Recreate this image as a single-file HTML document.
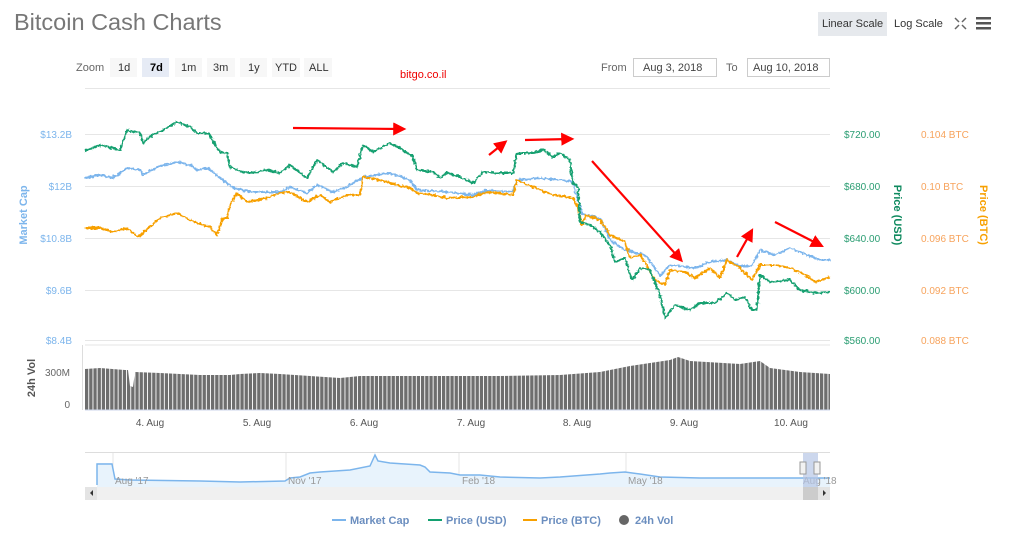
<!DOCTYPE html>
<html><head><meta charset="utf-8"><style>
html,body{margin:0;padding:0;background:#fff;width:1024px;height:533px;overflow:hidden;font-family:"Liberation Sans",sans-serif;}
</style></head><body>
<svg width="1024" height="533" xmlns="http://www.w3.org/2000/svg" font-family="Liberation Sans, sans-serif">
<defs>
<pattern id="bars" x="85" y="0" width="4.2" height="10" patternUnits="userSpaceOnUse"><rect x="0" y="0" width="3.3" height="10" fill="#6e6e6e"/></pattern>
<marker id="ah" markerWidth="6" markerHeight="6" refX="4" refY="3" orient="auto"><path d="M0,0 L6,3 L0,6 z" fill="#f00"/></marker>
<filter id="jit" x="-2%" y="-10%" width="104%" height="120%"><feTurbulence type="fractalNoise" baseFrequency="0.35" numOctaves="2" seed="3"/><feDisplacementMap in="SourceGraphic" scale="4" xChannelSelector="R" yChannelSelector="G"/></filter>
</defs>
<text x="14" y="30" font-size="23.5" fill="#777">Bitcoin Cash Charts</text>
<rect x="818" y="12" width="69" height="24" fill="#e6e9ed"/>
<text x="822" y="27" font-size="11" fill="#333">Linear Scale</text>
<text x="894" y="27" font-size="11" fill="#333">Log Scale</text>
<g stroke="#666" stroke-width="1.5" fill="none"><path d="M955,18 l4,4 M966,18 l-4,4 M955,29 l4,-4 M966,29 l-4,-4"/></g>
<g fill="#555"><rect x="976" y="17" width="15" height="2.5"/><rect x="976" y="22" width="15" height="2.5"/><rect x="976" y="27" width="15" height="2.5"/></g>
<text x="76" y="71" font-size="11" fill="#666">Zoom</text>
<g font-size="11" fill="#333">
<rect x="110" y="58" width="27" height="19" fill="#f7f7f7"/><text x="118" y="71">1d</text>
<rect x="142" y="58" width="27" height="19" fill="#e6ebf5"/><text x="150" y="71" font-weight="bold" fill="#000">7d</text>
<rect x="175" y="58" width="27" height="19" fill="#f7f7f7"/><text x="181" y="71">1m</text>
<rect x="207" y="58" width="28" height="19" fill="#f7f7f7"/><text x="213" y="71">3m</text>
<rect x="240" y="58" width="27" height="19" fill="#f7f7f7"/><text x="248" y="71">1y</text>
<rect x="272" y="58" width="28" height="19" fill="#f7f7f7"/><text x="275" y="71">YTD</text>
<rect x="304" y="58" width="28" height="19" fill="#f7f7f7"/><text x="309" y="71">ALL</text>
</g>
<text x="400" y="78" font-size="11" fill="#e00">bitgo.co.il</text>
<text x="601" y="71" font-size="11" fill="#666">From</text>
<rect x="633.5" y="58.5" width="83" height="18" fill="#fff" stroke="#ccc"/>
<text x="643" y="71" font-size="11" fill="#444">Aug 3, 2018</text>
<text x="726" y="71" font-size="11" fill="#666">To</text>
<rect x="747.5" y="58.5" width="82" height="18" fill="#fff" stroke="#ccc"/>
<text x="753" y="71" font-size="11" fill="#444">Aug 10, 2018</text>
<g stroke="#e6e6e6" stroke-width="1"><path d="M85,88.5H830M85,134.5H830M85,186.5H830M85,238.5H830M85,290.5H830M85,340.5H830"/></g>
<g font-size="10" fill="#7cb5ec" text-anchor="end"><text x="72" y="138">$13.2B</text><text x="72" y="190">$12B</text><text x="72" y="242">$10.8B</text><text x="72" y="294">$9.6B</text><text x="72" y="344">$8.4B</text></g>
<text transform="translate(27,215) rotate(-90)" font-size="11" font-weight="bold" fill="#7cb5ec" text-anchor="middle">Market Cap</text>
<g font-size="10" fill="#2a9d72"><text x="844" y="138">$720.00</text><text x="844" y="190">$680.00</text><text x="844" y="242">$640.00</text><text x="844" y="294">$600.00</text><text x="844" y="344">$560.00</text></g>
<g font-size="10" fill="#f7a35c"><text x="921" y="138">0.104 BTC</text><text x="921" y="190">0.10 BTC</text><text x="921" y="242">0.096 BTC</text><text x="921" y="294">0.092 BTC</text><text x="921" y="344">0.088 BTC</text></g>
<text transform="translate(894,215) rotate(90)" font-size="11" font-weight="bold" fill="#0f8a5f" text-anchor="middle">Price (USD)</text>
<text transform="translate(980,215) rotate(90)" font-size="11" font-weight="bold" fill="#f7a000" text-anchor="middle">Price (BTC)</text>
<g fill="none" stroke-width="2" stroke-linejoin="round" filter="url(#jit)">
<polyline stroke="#7cb5ec" points="85,178 100,175 113,178 127,168 140,170 143,175 157,167 177,162 190,165 197,170 208,168 223,180 233,188 253,192 280,192 290,187 307,193 317,185 333,192 347,187 363,177 390,173 410,180 417,190 447,192 473,195 487,190 513,192 517,180 540,178 560,180 573,182 577,197 582,214 600,218 610,240 625,250 645,255 655,268 660,276 670,265 695,268 710,262 727,260 740,266 752,266 760,250 775,255 790,248 805,254 820,260 830,260"/>
<polyline stroke="#f7a000" points="85,228 100,228 113,232 127,228 138,237 150,227 160,218 177,213 190,220 197,223 210,227 217,235 223,218 227,218 230,205 237,193 247,202 267,198 280,193 290,192 307,202 320,195 330,202 347,195 360,195 363,177 380,180 397,185 410,188 417,193 433,195 447,198 473,197 487,192 513,195 517,180 533,187 553,195 573,198 578,207 582,225 586,215 600,220 610,235 625,242 630,258 640,255 645,262 655,280 665,285 670,270 685,272 695,278 710,268 720,278 727,260 740,268 752,280 760,265 775,265 790,268 805,275 815,282 830,277"/>
<polyline stroke="#13a070" points="85,151 100,145 120,150 123,142 127,130 140,133 143,143 152,135 160,132 168,127 177,122 190,127 197,133 208,133 220,152 227,153 230,167 243,172 253,173 267,170 280,173 290,165 307,178 317,160 333,172 343,163 357,167 363,145 373,152 390,143 403,150 413,157 417,170 433,172 440,178 447,173 460,177 473,183 483,172 497,173 513,173 517,153 533,153 543,150 553,157 560,153 570,160 573,183 578,187 580,222 590,225 600,232 610,245 615,262 625,258 632,280 640,268 650,270 660,295 665,318 675,305 690,310 700,303 715,303 727,293 735,300 745,297 752,310 757,310 760,275 770,282 790,280 800,290 815,293 830,292"/>
</g>
<g stroke="#f00" stroke-width="2.2" fill="none" marker-end="url(#ah)">
<line x1="293" y1="128" x2="402" y2="129"/><line x1="489" y1="155" x2="504" y2="143"/><line x1="525" y1="140" x2="570" y2="139"/><line x1="592" y1="161" x2="680" y2="259"/><line x1="737" y1="257" x2="751" y2="232"/><line x1="775" y1="222" x2="820" y2="245"/>
</g>
<text transform="translate(35,378) rotate(-90)" font-size="11" font-weight="bold" fill="#555" text-anchor="middle">24h Vol</text>
<text x="70" y="376" font-size="10" fill="#666" text-anchor="end">300M</text>
<text x="70" y="408" font-size="10" fill="#666" text-anchor="end">0</text>
<line x1="82.5" y1="345" x2="82.5" y2="410" stroke="#ddd"/>
<line x1="85" y1="345" x2="830" y2="345" stroke="#e6e6e6"/>
<polygon fill="url(#bars)" points="85,369 100,368 125,370 128,370 130,386 133,387 135,372 160,373 200,375 230,375 240,374 260,373 280,374 340,378 360,376 500,376 560,375 600,372 630,366 650,363 670,360 678,357 690,361 740,364 760,361 770,368 800,372 830,374 830,410 85,410"/>
<line x1="85" y1="410" x2="830" y2="410" stroke="#ccd6eb"/>
<g font-size="10" fill="#555" text-anchor="middle"><text x="150" y="426">4. Aug</text><text x="257" y="426">5. Aug</text><text x="364" y="426">6. Aug</text><text x="471" y="426">7. Aug</text><text x="577" y="426">8. Aug</text><text x="684" y="426">9. Aug</text><text x="791" y="426">10. Aug</text></g>
<line x1="85" y1="452.5" x2="830" y2="452.5" stroke="#ddd"/>
<g stroke="#e6e6e6"><path d="M113,453V487M286,453V487M459,453V487M626,453V487"/></g>
<polygon fill="#e8f3fc" points="97,485 97,463 112,463 115,479 130,480 200,481 240,482 285,481 290,478 300,477 310,473 320,472 350,470 370,466 375,455 378,461 390,463 420,465 425,467 430,472 450,473 460,475 480,475 500,477 540,478 560,477 600,474 610,473 625,472 640,474 660,477 700,478 760,478 800,478 830,478 830,487 97,487"/>
<polyline fill="none" stroke="#7cb5ec" stroke-width="1.5" points="97,485 97,464 112,464 115,479 130,480 200,481 240,482 285,481 290,478 300,477 310,473 320,472 350,470 370,466 375,455 378,461 390,463 420,465 425,467 430,472 450,473 460,475 480,475 500,477 540,478 560,477 600,474 610,473 625,472 640,474 660,477 700,478 760,478 800,478 830,478"/>
<g font-size="10" fill="#999"><text x="115" y="484">Aug '17</text><text x="288" y="484">Nov '17</text><text x="462" y="484">Feb '18</text><text x="628" y="484">May '18</text><text x="803" y="484">Aug '18</text></g>
<rect x="803" y="453" width="15" height="34" fill="#b7c6e6" opacity="0.7"/>
<rect x="800" y="462" width="6" height="12" fill="#f2f2f2" stroke="#999"/>
<rect x="814" y="462" width="6" height="12" fill="#f2f2f2" stroke="#999"/>
<rect x="85" y="487" width="745" height="13" fill="#f0f0f0"/>
<rect x="85" y="487" width="12" height="13" fill="#e4e4e4"/>
<path d="M93,490 l-3,3 3,3z" fill="#333"/>
<rect x="803" y="487" width="15" height="13" fill="#ccc"/>
<rect x="818" y="487" width="12" height="13" fill="#e4e4e4"/>
<path d="M823,490 l3,3 -3,3z" fill="#333"/>
<g font-size="11" font-weight="bold" fill="#6b8ebf">
<line x1="332" y1="520" x2="346" y2="520" stroke="#7cb5ec" stroke-width="2"/><text x="350" y="524">Market Cap</text>
<line x1="428" y1="520" x2="442" y2="520" stroke="#13a070" stroke-width="2"/><text x="446" y="524">Price (USD)</text>
<line x1="523" y1="520" x2="537" y2="520" stroke="#f7a000" stroke-width="2"/><text x="541" y="524">Price (BTC)</text>
<circle cx="624" cy="520" r="5" fill="#666"/><text x="635" y="524">24h Vol</text>
</g>
</svg>
</body></html>
